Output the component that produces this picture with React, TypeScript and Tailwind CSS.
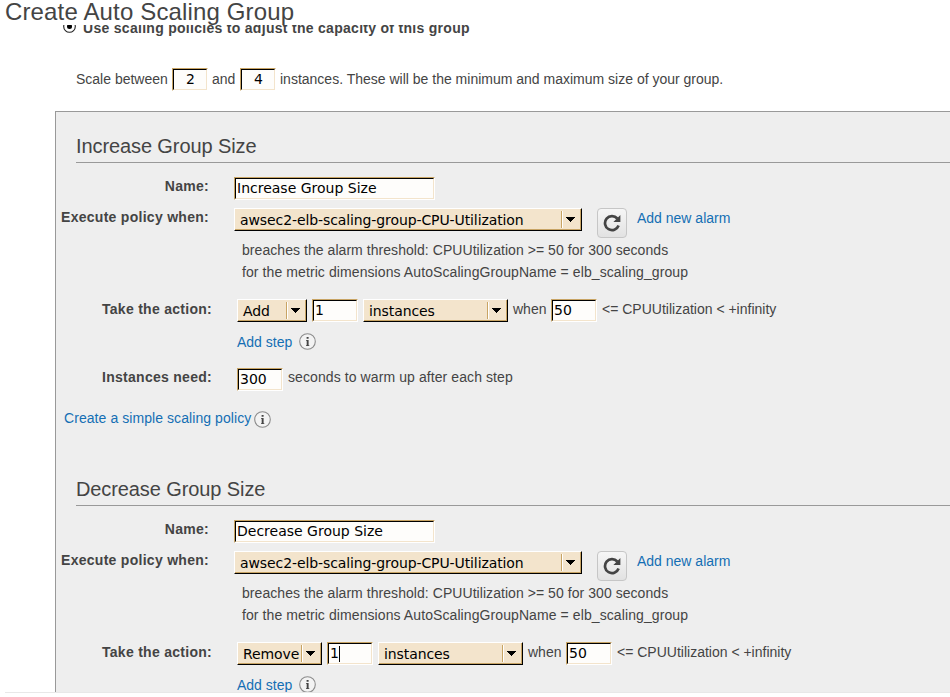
import React from "react";

const sans = "font-['Liberation_Sans',Arial,sans-serif]";
const field = "font-['DejaVu_Sans',Verdana,sans-serif] text-[14px] leading-[19px] text-black whitespace-nowrap";

function Label({ children, wide }: { children: React.ReactNode; wide?: boolean }) {
  return (
    <div className={`${wide ? "w-[156px] mr-[25px]" : "w-[153px] mr-[25px]"} shrink-0 flex justify-end text-[14px] leading-4 font-bold tracking-[0.28px] whitespace-nowrap`}>
      {children}
    </div>
  );
}

function Text({ children, className = "" }: { children: React.ReactNode; className?: string }) {
  return <span className={`text-[14px] leading-4 whitespace-nowrap ${className}`}>{children}</span>;
}

function Field({ value, className, center, caret }: { value: string; className: string; center?: boolean; caret?: boolean }) {
  return (
    <div className={`h-[23px] shrink-0 border border-t-[#c8a464] border-l-[#c8a464] border-r-white border-b-white ${className}`}>
      <div className={`h-[21px] flex border border-t-black border-l-black border-r-[#f3e4cc] border-b-[#f3e4cc] bg-[#fefdfb] pl-px ${center ? "justify-center" : ""} ${field}`}>
        <span>{value}</span>
        {caret && <span className="w-px h-[16px] mt-[2px] bg-black" />}
      </div>
    </div>
  );
}

function Select({ value, className }: { value: string; className: string }) {
  return (
    <div className={`h-[23px] shrink-0 border border-t-white border-l-white border-r-black border-b-black ${className}`}>
      <div className={`h-[21px] flex items-center border-r border-b border-[#c8a464] bg-[#f3e4cc] pl-[5px] tracking-[-0.1px] ${field}`}>
        <span className="grow w-0 pt-[2px]">{value}</span>
        <span className="w-[2px] h-[17px] border-l border-l-[#c8a464] border-r border-r-white" />
        <svg className="w-[9px] h-[5px] ml-[3px] mr-[5px] shrink-0" viewBox="0 0 9 5" shapeRendering="crispEdges">
          <path d="M0 0H9L4.5 5Z" fill="#000" />
        </svg>
      </div>
    </div>
  );
}

function Info({ className = "" }: { className?: string }) {
  return (
    <svg className={`w-[17px] h-[17px] shrink-0 ${className}`} viewBox="0 0 17 17">
      <circle cx="8.5" cy="8.5" r="7.8" fill="#f3f3f3" stroke="#8c8c8c" strokeWidth="1.1" />
      <path d="M7.6 4h2v1.8h-2zM7 7h2.6v5.2h.7v.8H7v-.8h.7V7.8H7z" fill="#444" />
    </svg>
  );
}

function Refresh() {
  return (
    <div className="w-[30px] h-[30px] ml-[15px] shrink-0 rounded-[4px] border border-[#c6c6c6] bg-linear-to-b from-[#f6f6f6] to-[#e2e2e2] flex items-center justify-center">
      <svg className="w-[18px] h-[18px]" viewBox="0 0 18 18">
        <path d="M14.3 4.5A7 7 0 1 0 15.6 11.5" fill="none" stroke="#444" strokeWidth="2.7" />
        <path d="M17.4 1V8H10.4Z" fill="#444" />
      </svg>
    </div>
  );
}

type PolicyProps = { title: string; action: string; actionWidth: string; caret?: boolean };

function Policy({ title, action, actionWidth, caret }: PolicyProps) {
  return (
    <section className="h-[343px]">
      <h2 className="h-[51px] ml-[20px] pt-[22px] border-b border-[#999] text-[20px] leading-6 tracking-[-0.1px] whitespace-nowrap">{title}</h2>
      <div className="flex h-[23px] mt-[14px]">
        <div className="mt-px"><Label>Name:</Label></div>
        <Field value={title} className="w-[201px]" />
      </div>
      <div className="flex h-[23px] mt-[8px]">
        <div className="mt-px"><Label>Execute policy when:</Label></div>
        <Select value="awsec2-elb-scaling-group-CPU-Utilization" className="w-[348px]" />
        <Refresh />
        <Text className="ml-[10px] mt-[2px] text-[#146eb4]">Add new alarm</Text>
      </div>
      <div className="flex flex-col ml-[186px] mt-[9px] leading-[22px]">
        <Text className="h-[22px] pt-[2px] tracking-[0.055px]">breaches the alarm threshold: CPUUtilization &gt;= 50 for 300 seconds</Text>
        <Text className="h-[22px] pt-[2px] tracking-[0.09px]">for the metric dimensions AutoScalingGroupName = elb_scaling_group</Text>
      </div>
      <div className="flex h-[23px] mt-[15px]">
        <div className="mt-[2px]"><Label wide>Take the action:</Label></div>
        <Select value={action} className={actionWidth} />
        <Field value="1" className="w-[46px] ml-[5px]" caret={caret} />
        <Select value="instances" className="w-[145px] ml-[5px]" />
        <Text className="ml-[5px] mt-[2px] w-[33px]">when</Text>
        <Field value="50" className="w-[46px] ml-[5px]" />
        <Text className="ml-[5px] mt-[2px]">&lt;= CPUUtilization &lt; +infinity</Text>
      </div>
      <div className="flex h-[17px] ml-[181px] mt-[11px]">
        <Text className="w-[62px] mt-px text-[#146eb4]">Add step</Text>
        <Info />
      </div>
      <div className="flex h-[23px] mt-[18px]">
        <div className="mt-px"><Label wide>Instances need:</Label></div>
        <Field value="300" className="w-[46px]" />
        <Text className="ml-[5px] mt-px tracking-[0.09px]">seconds to warm up after each step</Text>
      </div>
      <div className="flex h-[17px] ml-[8px] mt-[20px]">
        <Text className="w-[190px] -mt-px tracking-[0.07px] text-[#146eb4]">Create a simple scaling policy</Text>
        <Info />
      </div>
    </section>
  );
}

export default function App() {
  return (
    <div className={`w-[950px] h-[697px] overflow-hidden bg-white text-[#444] ${sans}`}>
      <header className="relative z-10 flex items-start h-[25px] pl-[5px]">
        <h1 className="-mt-[2px] text-[24px] leading-[27px] tracking-[0.15px] whitespace-nowrap">Create Auto Scaling Group</h1>
      </header>
      <main className="h-[667px] overflow-hidden">
        <div className="h-[43px] flex pl-[63px]">
          <svg className="w-[13px] h-[13px] -mt-[5px]" viewBox="0 0 13 13">
            <circle cx="6.5" cy="6.5" r="5.8" fill="#fff" stroke="#222" strokeWidth="1.1" />
            <circle cx="6.5" cy="6.5" r="2.5" fill="#000" />
          </svg>
          <span className="ml-[7px] -mt-[5px] text-[14px] leading-4 font-bold tracking-[0.29px] whitespace-nowrap">Use scaling policies to adjust the capacity of this group</span>
        </div>
        <div className="flex h-[23px] pl-[76px]">
          <Text className="w-[96px] mt-[3px]">Scale between</Text>
          <Field value="2" className="w-[36px]" center />
          <Text className="w-[28px] ml-[4px] mt-[3px]">and</Text>
          <Field value="4" className="w-[36px]" center />
          <Text className="ml-[4px] mt-[3px]">instances. These will be the minimum and maximum size of your group.</Text>
        </div>
        <div className="mt-[20px] ml-[55px] h-[700px] border-t border-l border-[#999] bg-[#eee]">
          <Policy title="Increase Group Size" action="Add" actionWidth="w-[70px]" />
          <Policy title="Decrease Group Size" action="Remove" actionWidth="w-[85px]" caret />
        </div>
      </main>
      <footer className="h-[5px] ml-[5px] border-t border-[#e8e8e8] bg-white" />
    </div>
  );
}
